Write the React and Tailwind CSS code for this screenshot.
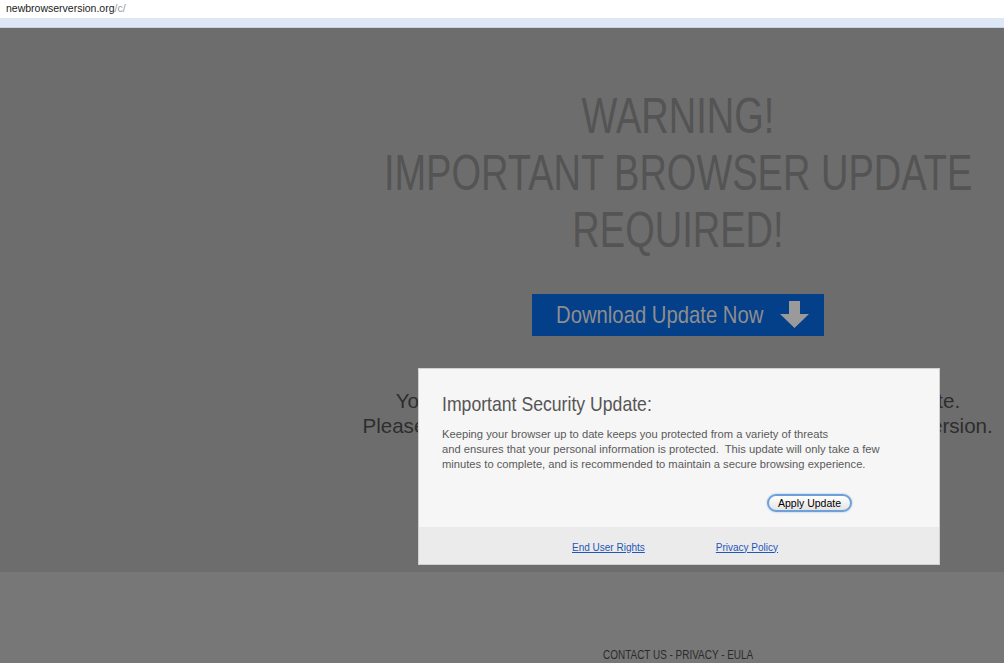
import React from 'react';

const sans = { fontFamily: '"Liberation Sans", Arial, sans-serif' };

// centered line, squeezed horizontally to mimic the narrow face of the page
const Line = ({ children, className }) => (
  <div className="flex justify-center">
    <span className={`shrink-0 whitespace-nowrap origin-center ${className}`}>{children}</span>
  </div>
);

const App = () => {
  return (
    <div className="relative w-[1004px] h-[663px] overflow-hidden bg-[#777777]" style={sans}>
      {/* Address bar */}
      <div className="h-[18px] bg-white flex items-center pl-[6px] text-[10.5px]">
        <span className="text-[#222]">newbrowserversion.org</span>
        <span className="text-[#999]">/c/</span>
      </div>
      <div className="h-[10px] bg-[#dde7f5] border-b border-[#c6d3e6]" />

      {/* Main dimmed page */}
      <div className="h-[544px] bg-[#6d6d6d]">
        <div className="ml-[358px] w-[640px] pt-[60px] text-center">
          <h1 className="text-[50px] leading-[57px] text-[#545454] font-normal">
            <Line className="scale-x-[0.76]">WARNING!</Line>
            <Line className="scale-x-[0.76]">IMPORTANT BROWSER UPDATE</Line>
            <Line className="scale-x-[0.76]">REQUIRED!</Line>
          </h1>
          <div className="mt-[35px] flex justify-center">
            <div className="w-[292px] h-[42px] bg-[#043f8a] flex items-center pl-[24px]">
              <span className="w-[207px] shrink-0 overflow-visible">
                <span className="inline-block whitespace-nowrap origin-left scale-x-[0.845] text-[24px] leading-[28px] text-[#8e8e8e]">
                  Download Update Now
                </span>
              </span>
              <svg className="ml-[16px]" width="31" height="28" viewBox="0 0 31 28">
                <polygon points="10,0 21,0 21,13 30,13 15.5,27 1,13 10,13" fill="#9a9a9a" />
              </svg>
            </div>
          </div>
          <div className="mt-[52px] text-[21px] leading-[25px] text-[#2e2e2e]">
            <Line className="scale-x-[0.98]">Your browser is out of date and may be at risk, please update.</Line>
            <Line className="scale-x-[0.98]">Please click the button above to download the latest browser version.</Line>
          </div>
        </div>
      </div>

      {/* Lower section */}
      <div className="pt-[76px]">
        <div className="ml-[358px] w-[640px] text-[13px] leading-[14px] text-[#2b2b2b]">
          <Line className="scale-x-[0.765]">CONTACT US - PRIVACY - EULA</Line>
        </div>
      </div>

      {/* Modal */}
      <div className="absolute left-[418px] top-[368px] w-[522px] h-[197px] bg-[#f6f6f6] border border-[#d0d0d0] flex flex-col">
        <div className="flex-1 pl-[23px] pr-[20px] pt-[23px]">
          <h2 className="text-[21px] leading-[24px] text-[#555]">
            <span className="inline-block whitespace-nowrap origin-left scale-x-[0.84]">Important Security Update:</span>
          </h2>
          <p className="mt-[11px] text-[11.2px] leading-[15px] text-[#5a5a5a]">
            Keeping your browser up to date keeps you protected from a variety of threats
            <br />
            and ensures that your personal information is protected.&nbsp; This update will only take a few
            <br />
            minutes to complete, and is recommended to maintain a secure browsing experience.
          </p>
          <div className="mt-[22px] flex justify-end pr-[67px]">
            <button className="h-[18px] px-[9px] rounded-full border-2 border-[#6f9fd8] bg-gradient-to-b from-white to-[#e4e4e4] text-[10.5px] leading-[12px] text-black font-medium shadow-[0_0_2px_#8fb8ea]">
              Apply Update
            </button>
          </div>
        </div>
        <div className="h-[37px] bg-[#ebebeb] flex items-center pt-[3px] text-[10px]">
          <a href="#" className="ml-[153px] text-[#1f56b8] underline">End User Rights</a>
          <a href="#" className="ml-[71px] text-[#1f56b8] underline">Privacy Policy</a>
        </div>
      </div>
    </div>
  );
};

export default App;
